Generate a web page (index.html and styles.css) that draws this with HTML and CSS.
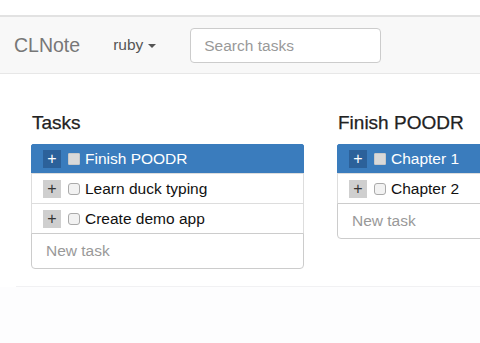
FILE: index.html
```html
<!DOCTYPE html>
<html>
<head>
<meta charset="utf-8">
<link rel="stylesheet" href="styles.css">
</head>
<body>
<div class="topgap"></div>
<nav class="navbar">
  <span class="brand">CLNote</span>
  <span class="dropdown">ruby <span class="caret"></span></span>
  <input class="search" type="text" placeholder="Search tasks">
</nav>
<main class="main">
  <section class="column">
    <h2 class="heading">Tasks</h2>
    <div class="list">
      <div class="row active"><span class="plus">+</span><span class="check"></span><span class="label">Finish POODR</span></div>
      <div class="row"><span class="plus">+</span><span class="check"></span><span class="label">Learn duck typing</span></div>
      <div class="row"><span class="plus">+</span><span class="check"></span><span class="label">Create demo app</span></div>
      <input class="newtask" type="text" placeholder="New task">
    </div>
  </section>
  <section class="column">
    <h2 class="heading">Finish POODR</h2>
    <div class="list">
      <div class="row active"><span class="plus">+</span><span class="check"></span><span class="label">Chapter 1</span></div>
      <div class="row"><span class="plus">+</span><span class="check"></span><span class="label">Chapter 2</span></div>
      <input class="newtask" type="text" placeholder="New task">
    </div>
  </section>
</main>
<div class="footer"></div>
</body>
</html>
```
FILE: styles.css
```css
html, body {
  margin: 0;
  padding: 0;
  background: #fff;
  overflow: hidden;
  font-family: "Liberation Sans", Arial, sans-serif;
  color: #333;
}
.topgap {
  height: 15px;
  background: #fff;
}
.navbar {
  display: flex;
  align-items: center;
  height: 59px;
  box-sizing: border-box;
  border-top: 2px solid #e2e2e2;
  border-bottom: 1px solid #e7e7e7;
  background: #f8f8f8;
  padding-left: 14px;
}
.brand {
  font-size: 19.5px;
  color: #777;
  margin-right: 33px;
}
.dropdown {
  font-size: 15.5px;
  color: #555;
  display: flex;
  align-items: center;
  margin-right: 34px;
}
.caret {
  display: inline-block;
  width: 0;
  height: 0;
  margin-left: 5px;
  margin-top: 2px;
  border-top: 4px solid #555;
  border-left: 4px solid transparent;
  border-right: 4px solid transparent;
}
.search {
  width: 191px;
  height: 35px;
  box-sizing: border-box;
  border: 1px solid #ccc;
  border-radius: 4px;
  background: #fff;
  padding: 0 13px;
  font-family: inherit;
  font-size: 15.5px;
  color: #555;
  outline: none;
  margin-top: 1px;
}
.search::placeholder, .newtask::placeholder {
  color: #999;
}
.main {
  display: flex;
  gap: 33px;
  margin-left: 16px;
  padding: 38px 0 17px 15px;
  border-bottom: 1px solid #f1f1f3;
  background: #fff;
}
.footer {
  height: 56px;
  background: #fdfdfe;
}
.column {
  width: 273px;
  flex-shrink: 0;
}
.heading {
  margin: 0 0 10px 1px;
  font-size: 19px;
  font-weight: 500;
  line-height: 22px;
  color: #222;
  -webkit-text-stroke: 0.25px #222;
}
.list {
  display: flex;
  flex-direction: column;
}
.row {
  display: flex;
  align-items: center;
  height: 31px;
  box-sizing: border-box;
  border: 1px solid #ddd;
  margin-top: -1px;
  padding-left: 11px;
  background: #fff;
  font-size: 15.5px;
  color: #111;
}
.row:first-child {
  margin-top: 0;
  height: 30px;
  border-top-left-radius: 2px;
  border-top-right-radius: 2px;
}
.row.active {
  background: #3a7cbd;
  border-color: #3a7cbd;
  color: #fff;
}
.plus {
  width: 18px;
  height: 18px;
  display: flex;
  align-items: center;
  justify-content: center;
  background: #cfcfcf;
  color: #333;
  font-size: 16px;
  line-height: 1;
}
.row.active .plus {
  background: #2c619a;
  color: #fff;
}
.check {
  width: 12px;
  height: 12px;
  margin-left: 7px;
  box-sizing: border-box;
  border: 1px solid #aaa;
  border-radius: 3px;
  background: #f2f2f2;
}
.row.active .check {
  border-radius: 1px;
  border-color: #c8c8c8;
  background: #d9d9d9;
}
.label {
  margin-left: 5px;
}
.newtask {
  height: 36px;
  box-sizing: border-box;
  margin-top: -1px;
  border: 1px solid #ccc;
  border-radius: 0 0 4px 4px;
  padding: 0 14px;
  font-family: inherit;
  font-size: 15.5px;
  color: #555;
  background: #fff;
  outline: none;
}
```
